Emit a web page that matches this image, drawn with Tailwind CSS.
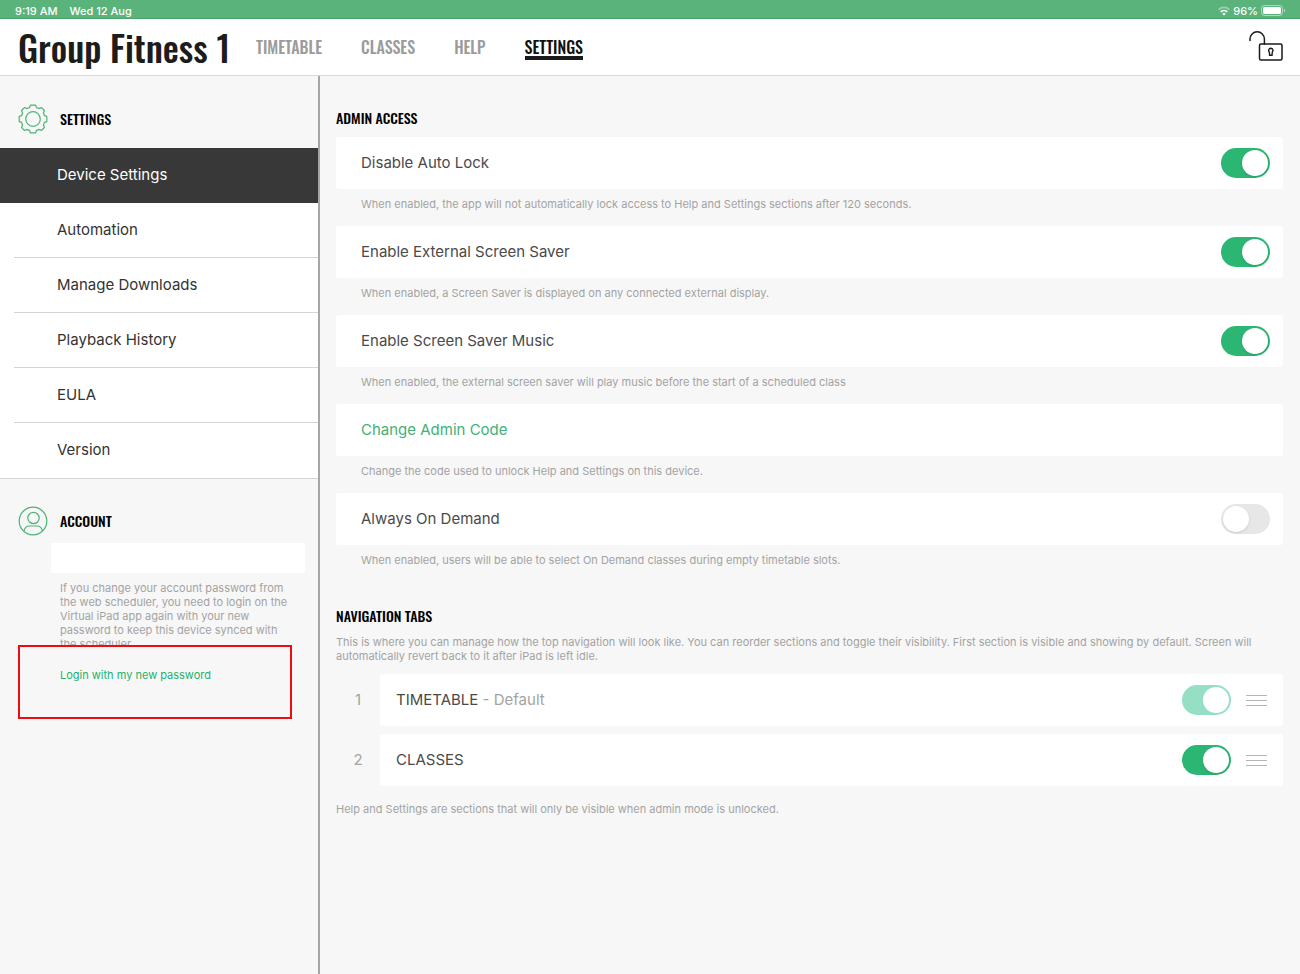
<!DOCTYPE html>
<html lang="en">
<head>
<meta charset="utf-8">
<meta name="viewport" content="width=device-width, initial-scale=1">
<title>Group Fitness 1 – Settings</title>
<script src="https://cdn.jsdelivr.net/npm/@tailwindcss/browser@4"></script>
</head>
<body class="flex min-h-screen flex-col bg-[#f7f7f7] font-['Inter','Liberation_Sans',sans-serif] text-[15px] text-[#4a4a4a]">

<div class="flex h-[19px] items-center justify-between border-b border-[#4aa56c] bg-[#5bb37c] pl-[15px] pr-[14px] pt-[3px] text-[11px] leading-4 font-medium text-white">
  <div class="flex gap-3"><span>9:19 AM</span><span>Wed 12 Aug</span></div>
  <div class="flex items-center gap-[3px]">
    <svg class="h-[10px] w-3" viewBox="0 0 12 10" fill="none" stroke="#fff" stroke-width="1.800">
      <path d="M.8 3.600a7.400 7.400 0 0 1 10.400 0" opacity=".4"/><path d="M2.700 5.900a4.700 4.700 0 0 1 6.600 0"/><path d="M6 9.600 4.200 7.800a2.600 2.600 0 0 1 3.600 0z" fill="#fff" stroke="none"/>
    </svg>
    <span>96%</span>
    <svg class="h-[11px] w-[25px]" viewBox="0 0 25 11" fill="none">
      <rect x=".5" y=".5" width="21" height="10" rx="3" stroke="#fff" stroke-opacity=".5"/><rect x="2" y="2" width="18" height="7" rx="1.500" fill="#fff"/><path d="M23 3.800v3.400c.8-.3 1.300-1 1.300-1.700S23.800 4.100 23 3.800z" fill="#fff" fill-opacity=".5"/>
    </svg>
  </div>
</div>

<header class="flex h-[57px] items-center border-b border-[#d9d9d9] bg-white pl-[18px] pr-4 font-['Oswald','Liberation_Sans_Narrow',sans-serif] font-medium">
  <h1 class="w-[238px] shrink-0 whitespace-nowrap text-[36px] leading-[44px] text-[#1c1c1c]">Group Fitness 1</h1>
  <nav class="flex gap-[39px] text-[16px] leading-5 text-[#9b9b9b]">
    <a href="#timetable">TIMETABLE</a>
    <a href="#classes">CLASSES</a>
    <a href="#help">HELP</a>
    <a href="#settings" aria-current="page" class="relative text-[#111] after:absolute after:inset-x-0 after:top-[19px] after:h-1 after:bg-[#1a1a1a]">SETTINGS</a>
  </nav>
  <button type="button" aria-label="Admin mode unlocked" class="ml-auto">
    <svg class="h-[32px] w-[36px]" viewBox="0 0 36 32" fill="none" stroke="#1a1a1a" stroke-width="1.500" stroke-linecap="round">
      <path d="M2 9.500V8a7.200 7.200 0 0 1 14.400 0v5"/><rect x="11.500" y="13" width="22.500" height="16" rx="1.500"/><path d="M22.800 17.300a2.200 2.200 0 0 1 1.500 3.800l-.3 3.200h-2.400l-.3-3.200a2.200 2.200 0 0 1 1.500-3.800z" stroke-width="1.400"/>
    </svg>
  </button>
</header>

<div class="flex flex-1">
  <aside class="w-[320px] shrink-0 border-r-2 border-[#a6a6a6]">
    <div class="flex h-[72px] items-center gap-3 pl-[18px] pt-[14px]">
      <svg class="size-[30px]" viewBox="0 0 30 30" fill="none" stroke="#4fb376" stroke-width="1.200" stroke-linejoin="round">
        <circle cx="15" cy="15" r="7.300"/>
        <path d="M12.300 1.200h5.400l.7 2.400q1.300.3 2.500 1l2.300-1.100q2 1.300 3.300 3.300l-1.100 2.300q.7 1.200 1 2.500l2.400.7v5.400l-2.400.7q-.3 1.300-1 2.500l1.100 2.300q-1.300 2-3.300 3.300l-2.300-1.100q-1.200.7-2.500 1l-.7 2.400h-5.400l-.7-2.400q-1.300-.3-2.500-1l-2.300 1.100q-2-1.300-3.300-3.300l1.100-2.300q-.7-1.200-1-2.500l-2.400-.7v-5.400l2.400-.7q.3-1.300 1-2.500l-1.100-2.300q1.300-2 3.300-3.300l2.300 1.100q1.200-.7 2.500-1z"/>
      </svg>
      <h2 class="font-['Oswald','Liberation_Sans_Narrow',sans-serif] text-[14px] leading-5 font-medium text-black">SETTINGS</h2>
    </div>
    <nav class="border-b border-[#d4d4d4] bg-white text-[#333]">
      <a href="#device" aria-current="page" class="flex h-[55px] items-center bg-[#383838] pl-[57px] text-white">Device Settings</a>
      <a href="#automation" class="ml-[14px] flex h-[55px] items-center border-b border-[#d4d4d4] pl-[43px]">Automation</a>
      <a href="#downloads" class="ml-[14px] flex h-[55px] items-center border-b border-[#d4d4d4] pl-[43px]">Manage Downloads</a>
      <a href="#history" class="ml-[14px] flex h-[55px] items-center border-b border-[#d4d4d4] pl-[43px]">Playback History</a>
      <a href="#eula" class="ml-[14px] flex h-[55px] items-center border-b border-[#d4d4d4] pl-[43px]">EULA</a>
      <a href="#version" class="ml-[14px] flex h-[55px] items-center pl-[43px]">Version</a>
    </nav>
    <div class="flex h-[64px] items-end gap-3 pb-[7px] pl-[18px]">
      <svg class="size-[30px]" viewBox="0 0 30 30" fill="none" stroke="#4fb376" stroke-width="1.200">
        <circle cx="15" cy="15" r="13.800"/><circle cx="15.500" cy="12" r="5.700"/><path d="M6 25.200c.6-3.400 2.500-5.200 5.500-5.200h7.500c3 0 4.900 1.800 5.500 5.200"/>
      </svg>
      <h2 class="mb-[5px] font-['Oswald','Liberation_Sans_Narrow',sans-serif] text-[14px] leading-5 font-medium text-black">ACCOUNT</h2>
    </div>
    <input type="text" aria-label="Account" class="ml-[51px] block h-[30px] w-[254px] bg-white px-2 outline-none">
    <p class="ml-[60px] mt-2 h-16 w-[236px] overflow-hidden text-[11px] leading-[14px] text-[#a3a3a3]">If you change your account password from the web scheduler, you need to login on the Virtual iPad app again with your new password to keep this device synced with the scheduler.</p>
    <div class="ml-[18px] mr-[26px] h-[74px] border-2 border-[#ec0c12] pl-10 pt-5 text-[11px] leading-4 text-[#23b26d]"><a href="#login">Login with my new password</a></div>
  </aside>

  <main class="min-w-0 flex-1 pl-4 pr-[17px] pt-8">
    <h2 class="h-[29px] font-['Oswald','Liberation_Sans_Narrow',sans-serif] text-[14px] leading-5 font-medium text-black">ADMIN ACCESS</h2>
    <section class="text-[#4a4a4a]">
      <div class="flex h-[52px] items-center justify-between rounded-[3px] bg-white pl-[25px] pr-[13px]">
        <label for="lock">Disable Auto Lock</label>
        <input id="lock" type="checkbox" role="switch" checked class="h-[30px] w-[49px] appearance-none rounded-full bg-[#e7e7e7] p-[2px] before:block before:size-[26px] before:rounded-full before:bg-white before:shadow checked:bg-[#2cb673] checked:before:ml-[19px]">
      </div>
      <p class="h-[37px] pl-[25px] pt-[7px] text-[11px] leading-4 text-[#a3a3a3]">When enabled, the app will not automatically lock access to Help and Settings sections after 120 seconds.</p>
      <div class="flex h-[52px] items-center justify-between rounded-[3px] bg-white pl-[25px] pr-[13px]">
        <label for="saver">Enable External Screen Saver</label>
        <input id="saver" type="checkbox" role="switch" checked class="h-[30px] w-[49px] appearance-none rounded-full bg-[#e7e7e7] p-[2px] before:block before:size-[26px] before:rounded-full before:bg-white before:shadow checked:bg-[#2cb673] checked:before:ml-[19px]">
      </div>
      <p class="h-[37px] pl-[25px] pt-[7px] text-[11px] leading-4 text-[#a3a3a3]">When enabled, a Screen Saver is displayed on any connected external display.</p>
      <div class="flex h-[52px] items-center justify-between rounded-[3px] bg-white pl-[25px] pr-[13px]">
        <label for="music">Enable Screen Saver Music</label>
        <input id="music" type="checkbox" role="switch" checked class="h-[30px] w-[49px] appearance-none rounded-full bg-[#e7e7e7] p-[2px] before:block before:size-[26px] before:rounded-full before:bg-white before:shadow checked:bg-[#2cb673] checked:before:ml-[19px]">
      </div>
      <p class="h-[37px] pl-[25px] pt-[7px] text-[11px] leading-4 text-[#a3a3a3]">When enabled, the external screen saver will play music before the start of a scheduled class</p>
      <button type="button" class="flex h-[52px] w-full items-center rounded-[3px] bg-white pl-[25px] text-[#43b077]">Change Admin Code</button>
      <p class="h-[37px] pl-[25px] pt-[7px] text-[11px] leading-4 text-[#a3a3a3]">Change the code used to unlock Help and Settings on this device.</p>
      <div class="flex h-[52px] items-center justify-between rounded-[3px] bg-white pl-[25px] pr-[13px]">
        <label for="demand">Always On Demand</label>
        <input id="demand" type="checkbox" role="switch" class="h-[30px] w-[49px] appearance-none rounded-full bg-[#e7e7e7] p-[2px] before:block before:size-[26px] before:rounded-full before:bg-white before:shadow checked:bg-[#2cb673] checked:before:ml-[19px]">
      </div>
      <p class="h-[37px] pl-[25px] pt-[7px] text-[11px] leading-4 text-[#a3a3a3]">When enabled, users will be able to select On Demand classes during empty timetable slots.</p>
    </section>

    <h2 class="mt-6 font-['Oswald','Liberation_Sans_Narrow',sans-serif] text-[14px] leading-5 font-medium text-black">NAVIGATION TABS</h2>
    <p class="mt-[9px] text-[11px] leading-[14px] text-[#a3a3a3]">This is where you can manage how the top navigation will look like. You can reorder sections and toggle their visibility. First section is visible and showing by default. Screen will automatically revert back to it after iPad is left idle.</p>
    <ol class="mt-[11px] flex flex-col gap-2">
      <li class="flex h-[52px] items-center">
        <span class="w-11 text-center text-[#a3a3a3]">1</span>
        <div class="flex h-full flex-1 items-center rounded-[3px] bg-white px-4">
          <label for="tab1">TIMETABLE <span class="text-[#a3a3a3]">- Default</span></label>
          <input id="tab1" type="checkbox" role="switch" checked disabled class="ml-auto h-[30px] w-[49px] appearance-none rounded-full bg-[#95e0c4] p-[2px] before:ml-[19px] before:block before:size-[26px] before:rounded-full before:bg-white">
          <button type="button" aria-label="Reorder Timetable" class="ml-[15px] flex w-[21px] flex-col gap-1"><span class="h-px bg-[#b5b5b5]"></span><span class="h-px bg-[#b5b5b5]"></span><span class="h-px bg-[#b5b5b5]"></span></button>
        </div>
      </li>
      <li class="flex h-[52px] items-center">
        <span class="w-11 text-center text-[#a3a3a3]">2</span>
        <div class="flex h-full flex-1 items-center rounded-[3px] bg-white px-4">
          <label for="tab2">CLASSES</label>
          <input id="tab2" type="checkbox" role="switch" checked class="ml-auto h-[30px] w-[49px] appearance-none rounded-full bg-[#e7e7e7] p-[2px] before:block before:size-[26px] before:rounded-full before:bg-white before:shadow checked:bg-[#2cb673] checked:before:ml-[19px]">
          <button type="button" aria-label="Reorder Classes" class="ml-[15px] flex w-[21px] flex-col gap-1"><span class="h-px bg-[#b5b5b5]"></span><span class="h-px bg-[#b5b5b5]"></span><span class="h-px bg-[#b5b5b5]"></span></button>
        </div>
      </li>
    </ol>
    <p class="mt-[15px] text-[11px] leading-4 text-[#a3a3a3]">Help and Settings are sections that will only be visible when admin mode is unlocked.</p>
  </main>
</div>
</body>
</html>
